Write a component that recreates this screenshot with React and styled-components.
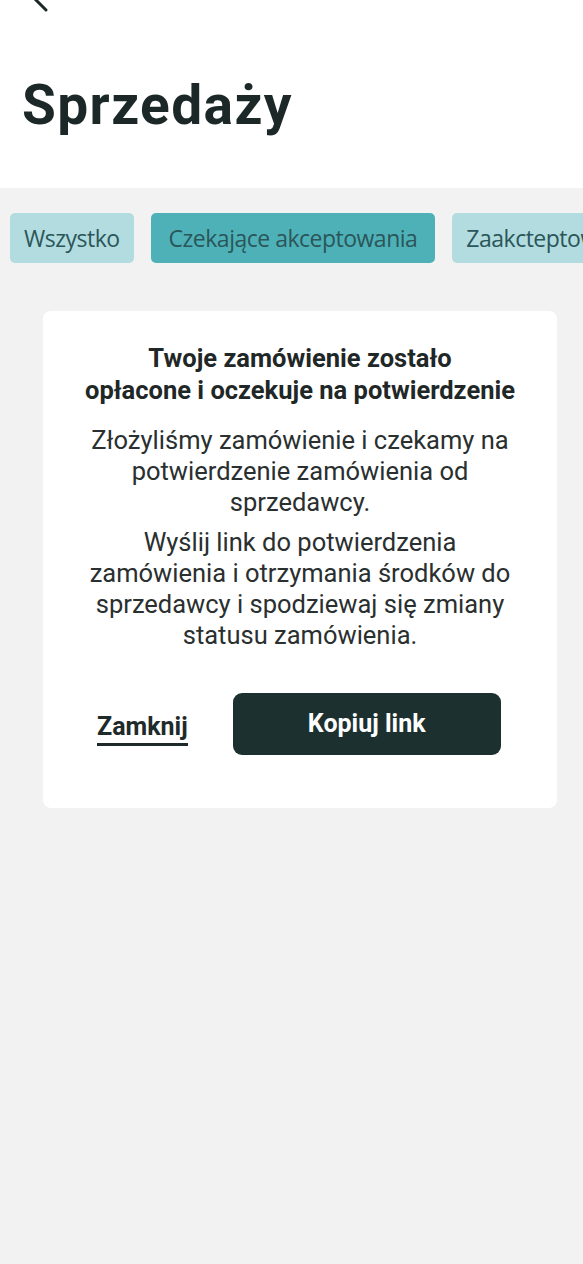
import React from "react";
import styled, { createGlobalStyle } from "styled-components";

const GlobalStyle = createGlobalStyle`
  html, body {
    margin: 0;
    padding: 0;
    background: #f2f2f2;
  }
  body {
    font-family: Roboto, "Noto Sans", sans-serif;
    color: #1f2b2b;
  }
`;

const Page = styled.div`
  width: 583px;
  min-height: 1264px;
  background: #f2f2f2;
  overflow: hidden;
`;

const Header = styled.header`
  background: #ffffff;
  height: 188px;
  display: flex;
  flex-direction: column;
`;

const BackButton = styled.div`
  height: 14px;
  padding-left: 24px;
  overflow: hidden;
  & svg {
    display: block;
    margin-top: -22px;
  }
`;

const Title = styled.h1`
  margin: 58px 0 0 22px;
  font-family: Roboto, sans-serif;
  font-weight: 700;
  font-size: 55px;
  line-height: 66px;
  letter-spacing: 1.4px;
  color: #1c2828;
`;

const Tabs = styled.nav`
  display: flex;
  gap: 17px;
  padding: 25px 0 0 10px;
  white-space: nowrap;
`;

const Tab = styled.div`
  flex-shrink: 0;
  height: 50px;
  padding: 0 ${(p) => (p.$active ? "18px" : "14px")};
  display: flex;
  align-items: center;
  border-radius: 5px;
  background: ${(p) => (p.$active ? "#4fb1b8" : "#b2dcdf")};
  font-family: "Open Sans", sans-serif;
  font-size: 23px;
  letter-spacing: -0.5px;
  color: #2a5659;
`;

const Card = styled.section`
  margin: 48px 26px 0 43px;
  background: #ffffff;
  border-radius: 8px;
  padding: 31px 10px 53px;
  text-align: center;
`;

const CardTitle = styled.h2`
  margin: 0;
  font-family: Roboto, sans-serif;
  font-weight: 700;
  font-size: 25.5px;
  line-height: 32px;
  color: #1f2727;
`;

const Text = styled.p`
  margin: ${(p) => (p.$first ? "19px" : "9px")} 0 0;
  font-family: Roboto, sans-serif;
  font-size: 25.5px;
  line-height: 31px;
  color: #2a2f2f;
`;

const Actions = styled.div`
  display: flex;
  align-items: center;
  margin-top: 42px;
  padding-left: 44px;
  gap: 45px;
`;

const LinkButton = styled.button`
  background: none;
  border: none;
  padding: 0 0 2px;
  border-bottom: 3px solid #1f2b2b;
  font-family: Roboto, sans-serif;
  font-weight: 700;
  font-size: 25px;
  color: #1f2b2b;
  margin-top: 10px;
`;

const PrimaryButton = styled.button`
  width: 268px;
  height: 62px;
  border: none;
  border-radius: 9px;
  background: #1d3030;
  color: #ffffff;
  font-family: Roboto, sans-serif;
  font-weight: 700;
  font-size: 25px;
  padding-bottom: 3px;
`;

export default function App() {
  return (
    <Page>
      <GlobalStyle />
      <Header>
        <BackButton>
          <svg width="30" height="36" viewBox="0 0 30 36">
            <path d="M22 4 L8 18 L22 32" fill="none" stroke="#1c2828" strokeWidth="3" strokeLinecap="round" />
          </svg>
        </BackButton>
        <Title>Sprzedaży</Title>
      </Header>
      <Tabs>
        <Tab>Wszystko</Tab>
        <Tab $active>Czekające akceptowania</Tab>
        <Tab>Zaakcteptowane</Tab>
      </Tabs>
      <Card>
        <CardTitle>
          Twoje zamówienie zostało
          <br />
          opłacone i oczekuje na potwierdzenie
        </CardTitle>
        <Text $first>
          Złożyliśmy zamówienie i czekamy na
          <br />
          potwierdzenie zamówienia od
          <br />
          sprzedawcy.
        </Text>
        <Text>
          Wyślij link do potwierdzenia
          <br />
          zamówienia i otrzymania środków do
          <br />
          sprzedawcy i spodziewaj się zmiany
          <br />
          statusu zamówienia.
        </Text>
        <Actions>
          <LinkButton>Zamknij</LinkButton>
          <PrimaryButton>Kopiuj link</PrimaryButton>
        </Actions>
      </Card>
    </Page>
  );
}
